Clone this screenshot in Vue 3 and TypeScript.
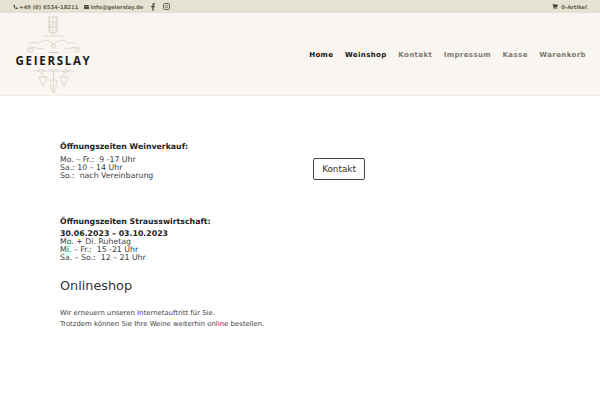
<template>
  <div class="page">
    <div class="topbar">
      <div class="contact">
        <span class="info">
          <svg width="5" height="6" viewBox="0 0 10 10"><path d="M1 1l2.200-.6L4.400 3 3.200 4.200c.6 1.100 1.500 2 2.600 2.600L7 5.600l2.600 1.200L9 9c-4.500.5-8.500-3.500-8-8z" fill="#4a4638"/></svg>
          +49 (0) 6534-18211
        </span>
        <span class="info mail">
          <svg width="5" height="4" viewBox="0 0 12 10"><path d="M0 0h12v10H0z" fill="#4a4638"/><path d="M0 1.500l6 4 6-4" fill="none" stroke="#e5e1d3" stroke-width="1"/></svg>
          info@geierslay.de
        </span>
        <svg class="fb" width="4" height="8" viewBox="0 0 6 11"><path d="M2 11V6H0V4h2V2.500C2 .8 3 0 4.300 0H6v2H4.800C4.200 2 4 2.300 4 2.800V4h2l-.3 2H4v5z" fill="#55513f"/></svg>
        <svg class="ig" width="7" height="7" viewBox="0 0 7 7"><rect x=".5" y=".5" width="6" height="6" rx="1.300" fill="none" stroke="#6a6655"/><circle cx="3.500" cy="3.500" r="1.300" fill="none" stroke="#6a6655" stroke-width=".8"/></svg>
      </div>
      <div class="cart">
        <svg width="6" height="5" viewBox="0 0 10 9"><path d="M0 0h2l.4 1H10L8.800 5.500H3.200L3.500 6.500H9v1H2.500L1.300 1H0z" fill="#3d3a2e"/><circle cx="3.500" cy="8.300" r=".8" fill="#3d3a2e"/><circle cx="7.800" cy="8.300" r=".8" fill="#3d3a2e"/></svg>
        <span>0-Artikel</span>
      </div>
    </div>

    <header class="header">
      <div class="logo">
        <svg class="ornament" width="77" height="40" viewBox="0 0 77 40">
          <g fill="none" stroke="#cfc8b7" stroke-width=".6">
            <path d="M33 2h10l-1 5 1 5-2 6h-6l-2-6 1-5z" />
            <path d="M35 2v16M38 1v18M41 2v16M33 7h10M33 12h10" />
            <path d="M28 21h21" />
            <path d="M38.500 30c-3-5-9-6-13-3-3 2-6 0-9 1-3 2-5 6-3 9M38.500 30c3-5 9-6 13-3 3 2 6 0 9 1 3 2 5 6 3 9" />
            <path d="M15 33c5-2 8 2 13 0M62 33c-5-2-8 2-13 0" />
            <circle cx="38.500" cy="31" r="2.200" />
            <circle cx="16" cy="35" r="2.200" />
            <circle cx="61" cy="35" r="2.200" />
            <path d="M34 37.500h9" stroke-width="1" />
          </g>
        </svg>
        <div class="wordmark">GEIERSLAY</div>
        <svg class="ornament lower" width="77" height="26" viewBox="0 0 77 26">
          <g fill="none" stroke="#cfc8b7" stroke-width=".6">
            <path d="M18 3h41" />
            <path d="M23 3l3-2 3 2-3 2zM48 3l3-2 3 2-3 2zM34 2h9" />
            <path d="M38.500 3v22M28 5v4M49 5v4" />
            <path d="M24 9h8l-2 5-2 4-2-4zM45 9h8l-2 5-2 4-2-4z" />
            <path d="M35.500 12h6l-.5 8-2.500 5-2.500-5z" />
          </g>
        </svg>
      </div>
      <nav class="nav">
        <a v-for="item in navItems" :key="item.label" class="nav-link" :class="{ active: item.active }">{{ item.label }}</a>
      </nav>
    </header>

    <main class="main">
      <section class="row">
        <div class="col">
          <p class="title">Öffnungszeiten Weinverkauf:</p>
          <p class="lines">Mo. – Fr.:&nbsp; 9 -17 Uhr<br />Sa.: 10 – 14 Uhr<br />So.:&nbsp; nach Vereinbarung</p>
        </div>
        <div class="button-col">
          <a class="button">Kontakt</a>
        </div>
      </section>
      <section class="second">
        <p class="title tight">Öffnungszeiten Strausswirtschaft:</p>
        <p class="lines"><strong>30.06.2023 – 03.10.2023</strong><br />Mo. + Di. Ruhetag<br />Mi. – Fr.:&nbsp; 15 -21 Uhr<br />Sa. – So.:&nbsp; 12 – 21 Uhr</p>
      </section>
      <h2 class="shop">Onlineshop</h2>
      <p class="note">Wir erneuern unseren Internetauftritt für Sie.<br />Trotzdem können Sie Ihre Weine weiterhin online bestellen.</p>
    </main>
  </div>
</template>

<script setup lang="ts">
interface NavItem {
  label: string
  active: boolean
}

const navItems: NavItem[] = [
  { label: 'Home', active: true },
  { label: 'Weinshop', active: true },
  { label: 'Kontakt', active: false },
  { label: 'Impressum', active: false },
  { label: 'Kasse', active: false },
  { label: 'Warenkorb', active: false }
]
</script>

<style>
html, body { margin: 0; background: #fff; }
</style>

<style scoped>
.page {
  width: 600px;
  height: 400px;
  overflow: hidden;
  font-family: "DejaVu Sans", sans-serif;
  color: #333;
  background: #fff;
}
.topbar {
  height: 13px;
  background: #e5e1d3;
  display: flex;
  justify-content: space-between;
  align-items: center;
  padding: 0 13px 0 13px;
  font-size: 5.300px;
  font-weight: 700;
  color: #66624f;
}
.contact, .cart, .info { display: flex; align-items: center; }
.info { gap: 1px; }
.mail { margin-left: 6px; }
.fb { margin-left: 8px; }
.ig { margin-left: 8px; }
.cart { gap: 3px; }
.header {
  height: 82px;
  background: #f9f6f1;
  border-bottom: 1px solid #f1eee8;
  display: flex;
  align-items: center;
  justify-content: space-between;
  padding: 0 14px 0 15px;
}
.logo {
  width: 77px;
  display: flex;
  flex-direction: column;
  align-items: center;
}
.ornament { display: block; }
.lower { margin-top: 2px; }
.wordmark {
  font-family: "Open Sans", sans-serif;
  font-size: 11.500px;
  line-height: 11px;
  font-weight: 700;
  letter-spacing: 1.700px;
  color: #1a1a1a;
  white-space: nowrap;
}
.nav { display: flex; gap: 11.500px; padding-top: 2px; }
.nav-link {
  font-size: 7px;
  font-weight: 700;
  letter-spacing: .4px;
  color: #7c7870;
}
.nav-link.active { color: #111; }
.main {
  padding: 45px 60px 0;
}
.row {
  display: grid;
  grid-template-columns: 253px 1fr;
  align-items: start;
}
.title {
  margin: 0 0 3.500px;
  font-weight: 700;
  font-size: 7.800px;
  line-height: 11px;
  color: #222;
}
.title.tight { margin-bottom: 2.500px; }
.lines {
  margin: 0;
  font-size: 7.800px;
  line-height: 8px;
  color: #3c3c3c;
}
.lines strong { color: #222; font-weight: 700; }
.button-col { display: flex; padding-top: 17px; }
.button {
  box-sizing: border-box;
  height: 22px;
  width: 52px;
  border: 1px solid #444;
  border-radius: 2px;
  text-align: center;
  font-size: 8.800px;
  line-height: 20px;
  color: #333;
}
.second { margin-top: 36px; }
.shop {
  margin: 15px 0 0;
  font-size: 12.800px;
  font-weight: 400;
  line-height: 17px;
  color: #333;
}
.note {
  margin: 14px 0 0;
  font-size: 6.900px;
  line-height: 11.600px;
  color: #444;
}
</style>
